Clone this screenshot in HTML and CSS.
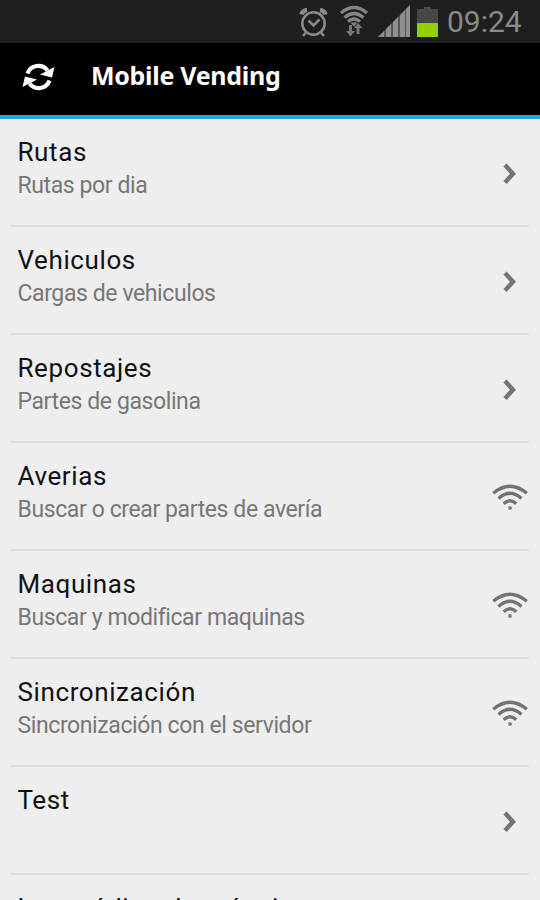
FILE: index.html
```
<!DOCTYPE html>
<html lang="es">
<head>
<meta charset="utf-8">
<title>Mobile Vending</title>
<link rel="stylesheet" href="styles.css">
</head>
<body>
<svg class="defs" aria-hidden="true">
  <symbol id="chevron" viewBox="0 0 36 36"><path d="M13 9 21 17.700l-8 8.700" fill="none" stroke="#747474" stroke-width="4.4"/></symbol>
  <symbol id="wifi" viewBox="0 0 36 36"><g fill="none" stroke="#737373" stroke-width="3.4"><path d="M1.3 13.300Q18 -0.600 34.700 13.300"/><path d="M6.500 18.500Q18 8.200 29.500 18.500"/><path d="M11.700 23.700Q18 17.700 24.300 23.700"/></g><circle cx="18" cy="28" r="2" fill="#808080"/></symbol>
</svg>
<div class="status">
  <svg class="status-icons" viewBox="0 0 142 43">
    <g fill="none" stroke="#8a8a8a" stroke-width="2.6">
      <circle cx="15.500" cy="23.500" r="11.200"/>
      <path d="M10.500 20.500l5 5 6-6M8 32.500l-3 3.500M23 32.500l3 3.500" stroke-width="2.500"/>
      <path d="M3.500 14.500q1-4 5.500-4.500M27.500 14.500q-1-4-5.500-4.500" stroke-width="4.500"/>
    </g>
    <g fill="none" stroke="#858585" stroke-width="3.200">
      <path d="M43 13Q56 2 69 13M46.500 17.500Q56 9.500 65.500 17.500M50 21.500Q56 16.500 62 21.500"/>
    </g>
    <path d="M52.500 22.500h7l-3.500 4z" fill="#858585"/>
    <path d="M51 25h3v6h3l-4.500 5.500-4.500-5.500h3zM58.500 34v-6h-2.500l4-5 4.500 5h-3v6z" fill="#777"/>
    <path d="M80 37 112 5v32z" fill="#555"/>
    <path d="M80 37 86 31v6zM88 29l5-5v13h-5zM95 22l5-5v20h-5zM102 15l5-5v27h-5zM108 9l4-4v32h-4z" fill="#8f8f8f"/>
    <path d="M119 23V9h7V7h7v2h7v14z" fill="#464749"/>
    <path d="M119 23h21v14h-21z" fill="#94d000"/>
  </svg>
  <span class="clock">09:24</span>
</div>
<header class="bar">
  <svg class="sync" viewBox="0 0 34 30">
    <g fill="none" stroke="#fff" stroke-width="4.200"><path d="M5.500 11.500A11.500 11.500 0 0 1 25.500 8.500"/><path d="M27.500 18.500A11.500 11.500 0 0 1 7.500 21.500"/></g>
    <path d="M32.500 5 30 15.500 18 12.500zM.5 25 3 14.500 15 17.500z" fill="#fff"/>
  </svg>
  <h1>Mobile Vending</h1>
</header>
<main class="list">
  <div class="row"><div><h2>Rutas</h2><p>Rutas por dia</p></div><svg><use href="#chevron"/></svg></div>
  <div class="row"><div><h2>Vehiculos</h2><p>Cargas de vehiculos</p></div><svg><use href="#chevron"/></svg></div>
  <div class="row"><div><h2>Repostajes</h2><p>Partes de gasolina</p></div><svg><use href="#chevron"/></svg></div>
  <div class="row"><div><h2>Averias</h2><p>Buscar o crear partes de avería</p></div><svg><use href="#wifi"/></svg></div>
  <div class="row"><div><h2>Maquinas</h2><p>Buscar y modificar maquinas</p></div><svg><use href="#wifi"/></svg></div>
  <div class="row"><div><h2>Sincronización</h2><p>Sincronización con el servidor</p></div><svg><use href="#wifi"/></svg></div>
  <div class="row"><div><h2>Test</h2></div><svg><use href="#chevron"/></svg></div>
  <div class="row"><div><h2>Leer código de máquina</h2></div></div>
</main>
</body>
</html>
```
FILE: styles.css
```
* { box-sizing: border-box; }
body { margin: 0; height: 900px; overflow: hidden; background: #eee; font-family: Roboto, sans-serif; }
.defs { display: none; }
h1, h2, p { margin: 0; font-weight: 400; white-space: nowrap; }
.status { height: 43px; background: #1f1f1f; display: flex; justify-content: flex-end; padding-right: 18px; }
.status-icons { width: 142px; height: 43px; margin-right: 7px; flex: none; }
.clock { color: #8a8a8a; font-size: 30px; line-height: 43px; width: 75px; }
.bar { height: 76px; background: #000; border-bottom: 4px solid #25a9dc; display: flex; align-items: center; padding: 0 0 6px 22px; }
.sync { width: 34px; height: 30px; margin: 2px 35px 0 0; }
h1 { color: #fff; font-family: "Noto Sans", sans-serif; font-size: 25px; line-height: 30px; font-weight: 700; letter-spacing: -.3px; padding-bottom: 2px; }
.list { padding: 0 11px; }
.row { height: 108px; border-bottom: 2px solid #dfdfdf; display: flex; justify-content: space-between; padding: 17px 1px 0 6.500px; }
.row svg { width: 36px; height: 36px; margin-top: 20px; flex: none; }
h2 { font-size: 26px; line-height: 33px; letter-spacing: .6px; color: #111; }
p { font-size: 23px; line-height: 33px; letter-spacing: -.4px; color: #777; }
```
